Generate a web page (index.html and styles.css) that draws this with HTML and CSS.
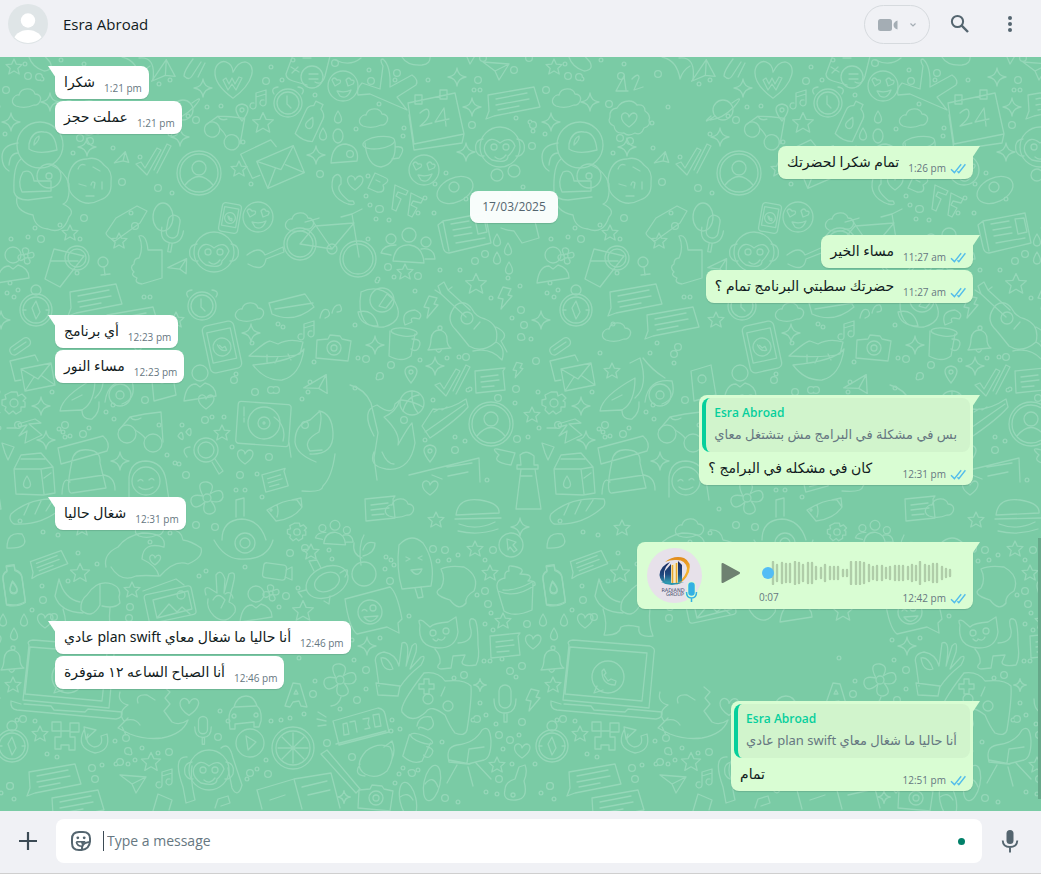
FILE: index.html
```html
<!DOCTYPE html>
<html lang="en">
<head>
<meta charset="utf-8">
<title>Esra Abroad</title>
<link rel="stylesheet" href="styles.css">
</head>
<body>
<svg class="sprite" width="0" height="0" aria-hidden="true">
  <defs>
    <symbol id="ticks" viewBox="0 0 16 11"><path d="M1 6.2 4.4 9.6 11.2 1.2M7.4 8.3 8.8 9.6 15.4 1.2" fill="none" stroke="#53bdeb" stroke-width="1.4"/></symbol>
    <path id="star" d="M0-8 2.4-2.8 8-2.4 3.8 1.4 5.2 7 0 4 -5.2 7 -3.8 1.4 -8-2.4 -2.4-2.8Z"/>
    <path id="spark" d="M0-9Q1-1 9 0Q1 1 0 9Q-1 1-9 0Q-1-1 0-9Z"/>
    <path id="heart" d="M0 7C-12-1-7-8-3-7Q0-6 0-3Q2-7 5-7C10-6 9 1 0 7Z"/>
    <path id="drop" d="M0-6Q-7 5 0 6Q7 5 0-6Z"/>
    <path id="bolt" d="M-2-11 6-9 3-3 7-2-4 11-2 1-7 0Z"/>
    <path id="cloud" d="M-11 8C-19 4-12-4-8-3C-6-11 6-11 8-4C17-4 14 8 7 7Q-2 11-11 8Z"/>
    <path id="plane" d="M-13-8 13-6 3 10-1 1Zl12 9L13-6"/>
    <path id="music" d="M-4 7V-6L6-9V4M-4-2 6-5M-4 7a3 3 0 1 1-2-3M6 4a3 3 0 1 1-2-3"/>
    <path id="pin" d="M0 9Q-12-6 0-8Q12-6 0 9ZM2-2a2 2 0 1 1-4 0a2 2 0 1 1 4 0"/>
    <g id="clock"><circle r="14"/><circle r="11"/><path d="M-1-7V1L3 5M-14-9q-4-6 4-7M14-9q4-6-4-7"/></g>
    <g id="gear"><circle r="4"/><path d="M-3-11h6l1 4 4-2 4 4-3 3 2 1v5l-4 0 0 4-5 3-3-3-4 3-4-4 1-3-4-2v-5l4-1-1-4 4-2Z"/></g>
    <g id="love"><circle r="15"/><path d="M-11-6q2-4 5 0q5-1 3 3l-5 3-3-6M3-6q3-4 5 0q5 0 2 4l-5 2-2-6M-6 5Q2 7 8 4Q4 14-3 10Z"/></g>
    <g id="profile"><circle r="22"/><circle r="19"/><circle cy="-5" r="7"/><path d="M-14 12Q0-5 14 12"/></g>
    <g id="person"><circle cy="-13" r="8"/><path d="M-16 15Q-14-2-4-2L0 1 5-3Q16 0 16 10Z"/></g>
    <g id="note"><path d="M-23-6 23-14 29 6-17 15-25 18-22 10ZM-15-2 16-8M-15 4 18-2M-13 9 8 5"/></g>
    <g id="notice"><path d="M-15-9 15-12 13-9 15 10-14 13ZM-9-3 8-5M-9 2 9 0M-8 7 4 6"/></g>
    <g id="compass"><circle r="16"/><circle r="13"/><circle cy="-20" r="5"/><path d="M0-9 4 2 0 9-4-2ZM-13 0h3M10 0h3"/></g>
    <g id="mug"><path d="M-13-12-14 13Q-1 20 8 13L12-9M9-4Q21-4 15 6Q12 9 8 6"/><ellipse cy="-11" rx="13" ry="4" transform="rotate(6)"/></g>
    <g id="bell"><path d="M-11 9Q-8 5-8-2Q-7-11 1-11Q8-9 8-2Q8 5 12 7ZM-3 9q3 5 6-1"/><circle cx="1" cy="-13" r="2"/></g>
    <g id="camera"><path d="M-17-8-6-9-4-13 6-12 8-9 17-7 14 13-18 10Z"/><circle r="7"/><circle r="3"/></g>
    <g id="mic"><rect x="-6" y="-18" width="12" height="23" rx="6"/><path d="M-11-4Q-11 10 0 10Q11 10 11-4M-1 10v9h3v-9"/></g>
    <g id="bottle"><path d="M-4-20h8v5q6 3 6 8v25q-9 4-19 0V-8q0-5 5-7Z"/><use href="#drop" y="2"/></g>
    <g id="phone"><rect x="-16" y="-24" width="32" height="48" rx="5"/><path d="M-12-17h24v31h-24Z"/><circle r="9"/><path d="M-4-3q2 8 8 7l-1-4-3 1-2-3"/></g>
    <g id="glasses"><circle cx="-12" r="9"/><circle cx="14" cy="9" r="9"/><path d="M-4-4Q3 0 6 4M-20-4-9-17 6-20 22-22 24 8M-9-17Q-5-12 2-16"/></g>
    <g id="monkey"><circle r="20"/><path d="M-17-8q-9 1-7 12q3 6 8 5M17-8q9 1 7 12q-3 6-8 5M-15-2Q-10-12 0-4Q11-12 15-1Q12 6 8 9Q8 17-8 13Q-18 6-15-2M-5 10Q1 15 6 8"/><circle cx="-6" r="3"/><circle cx="6" r="3"/></g>
    <g id="ticksbig"><path d="M-17 4-12 2-8 8 4-12 8-10-6 15ZM1 10 14-16 18-14 4 13"/></g>
    <g id="mail"><path d="M-16-7 14-13 18 9-12 15ZM-16-7 1 3 14-13M-12 15-3 1M18 9 5 0M-16 4l-6 1-5-20 25-6 3 6"/></g>
    <g id="group"><circle cy="-11" r="7"/><circle cx="-18" cy="-7" r="5"/><circle cx="17" cy="-4" r="5"/><path d="M-16 15Q-14-2 1-1Q14 1 15 17ZM-18 9-28 7Q-26-1-13-1M16 13h10Q25 1 12 3"/></g>
    <g id="news"><path d="M-24-12 18-20 24 10-18 20Q-23 20-24 14L-29-8-24-12-18 18M-16-9 2-12M-14-3 4-6M-13 3 5 0M-11 10 18 5M8-14 17-15 20-1 11 1Z"/></g>
    <g id="cookie"><path d="M-20-7Q-16-22-2-22Q8-25 15-16Q24-10 22 2Q23 15 11 19Q-2 26-12 18Q-24 10-20-7ZM-11-12q2-6 7-4M4-14l7 4M-10 3l7 2M2 4q1-5 4-2l-1 5M-3 15h8M13 1v7"/></g>
    <g id="flower"><circle r="4"/><path d="M-4-2Q-12-17 0-16Q9-14 3-4Q16-12 16-1Q14 6 4 3Q13 14 3 16Q-6 16-2 4Q-13 14-16 4Q-17-5-4-2Z"/></g>
    <g id="guitar"><path d="M-38-36-32-40-28-32-6-12M-38-36-35-28-10-5M-35-28l-6-4M-28-32l4-3M-20-17Q-11-23-4-13Q0-5 9-3Q24 3 20 20Q6 32-7 24Q-15 14-20 8Q-32-3-20-17ZM20 20Q30 25 26 38Q15 25-3 29M20 5Q34 12 25 19L31 30"/><circle cx="-9" cy="-4" r="6"/><path d="M-2 7 4 0"/></g>
    <g id="laptop"><path d="M-39-32Q-42-36-35-37L42-31Q48-29 46-23L41 31-45 23ZM-38-30 39-24 34 24-43 17ZM-47 27-57 24Q-58 32-51 33L48 42Q55 41 54 35L20 32 17 35-14 33-17 29-44 27"/><circle r="16"/><path d="M-11 9-14 16-5 13M-6-6Q-6 8 7 8L8 4 3 2 0 4-4-2-2-4-4-8Z"/></g>
    <g id="calendar"><path d="M-26-14 21-24 30 17-20 27ZM-25-2-20 33 28 26 30 17M-19-22h7v9h-7ZM6-27h7v9H6ZM-14-4Q-5-12-5-3Q-5 2-14 9L-2 6M12 9 10-9 1 5 15 2"/></g>
    <g id="astro"><circle r="23"/><path d="M-11-1Q-8-15 4-13Q15-13 17 5Q-2 10-11 4ZM-6 0q0-7 5-9q1 4-5 9M-22-2Q-38 0-38 12Q-38 22-31 26M-19 14Q-27 20-26 47Q-24 55-12 55L12 52M-22 8q-8 0-9 12M11 20Q25 26 29 39Q30 57 23 59Q36 65 29 72Q23 90 8 84Q-5 83-7 70Q-26 66-23 52M-17 27Q-23 37-18 47L11 46V36H-6Q-8 23-17 27Z"/><circle cx="9" cy="31" r="12"/><circle cx="9" cy="31" r="3"/></g>
    <g id="cat"><path d="M-22-19Q-28-22-25-15Q-28 7-6 8Q11 8 13-8L11-23 3-18Q-11-17-15-13ZM-10 9Q-4 16-5 23Q-10 28-4 29L6 28 8 16 20 15 17 22Q17 27 31 25Q35 18 33 5Q33-16 30-20Q22-25 26-10Q28 2 13 3M-12-1q4 4 5 0q5 3 7-2"/><circle cx="-12" cy="-7" r="3"/><circle cx="1" cy="-9" r="3"/></g>
    <g id="pad"><path d="M-12-32Q2-34 9-24Q29-26 35-19Q36-6 31 25Q29 32 19 28Q14 22 9 10Q-5-1-10 7Q-24 20-34 7Q-37 0-12-32Z"/><circle cx="-8" cy="-6" r="5"/><circle cx="12" cy="1" r="5"/><path d="M-12-26h5v5h5v5h-5v5h-5v-5h-5v-5h5ZM5-9 9-18"/></g>
    <g id="turntable"><rect x="-27" y="-20" width="53" height="42" rx="3" transform="rotate(4)"/><circle r="16"/><circle r="6"/><circle r="1"/><path d="M10-6Q23 3 19 18M-20-16v9M-20-5v4"/></g>
    <g id="lips"><path d="M-29-1Q-12-16-8-16L0-13Q11-19 25-15L22-3Q8 1-29-1ZM-25 8Q-13 24 4 23Q22 19 26-8Q17 4-25 8M-11-2v7M0 0-3 6M10-3l3 6"/></g>
    <g id="bike"><circle r="18"/><circle r="15"/><circle cx="-58" cy="-15" r="16"/><circle cx="-58" cy="-15" r="13"/><path d="M1-2-6-45-17-42M-6-45 4-50M-58-15-43-33-4-36-26-10ZM-26-10-46-39-53-37-39-41"/><circle cx="-26" cy="-10" r="5"/></g>
    <g id="airplane"><path d="M-5-28Q-9-35-5-35Q3-28 2-7L24-19Q31-14 28-9L9 3 19 16-18 0-30 1Q-32-5-26-11L-8-5Z"/></g>
    <g id="car"><path d="M-16 5Q-16-4-11-7Q-8-18 1-18Q9-18 12-8Q17-4 16 7L14 13H9V8L-10 10V15H-15ZM-10-7 11-8"/><circle cx="-11" cy="2" r="2"/><circle cx="11" cy="1" r="2"/></g>
    <g id="citrus"><circle r="21"/><circle r="17"/><path d="M0-15V15M-15 0H15M-11-11 11 11M11-11-11 11"/></g>
    <g id="chair"><path d="M-21 7Q-25-8-13-10Q5-12 12-25Q20-31 21-14Q21 3 14 5L-2 9ZM0 9-21 5M-13 10-23 28M-2 12 3 31M6 8 21 24M14-8-1-6-3 8"/></g>
    <g id="dog"><path d="M-8-5Q2-21 17-16Q27-12 24-3L25 3Q20 9 7 6M-8-5Q-15 0-14 10Q-3 20 5 5V-16M-12 13Q-35 12-40-4L-36-21Q-31-1-15 2M-32 9Q-27 25-31 35-16 36-14 27-8 24 4 27 2 38 18 36Q13 24 15 8"/></g>
    <g id="cup"><path d="M-19-8Q-17 15-3 16Q13 13 11-9M11-4Q24-6 15 7L8 8"/><ellipse cx="-4" cy="-9" rx="16" ry="6" transform="rotate(-8)"/></g>
    <g id="cream"><path d="M-17-24Q-5-37 7-26Q20-7 15 17L-14 20Q-20 0-17-24ZM-1 19 2 29 7 28 5 18M-10-8l4-2-4-2M6-9 2-11l4-2M-5 1 6 0Q2 10-5 1"/></g>
    <g id="pack"><path d="M-26-15 19-27Q27-20 23-12L-23 1ZM-12-2Q-10-15 5-13Q17-12 16 0L22 25-12 30Q-19 31-12-2ZM-14 17 20 12M-22 31Q-21 12-14 19M20 12Q31 14 31 27"/></g>
    <g id="dino"><path d="M-30-15Q-33-5-22-2-33 5-26 14-15 10-10 18M-12-4Q-15-13-3-12L5-7M14-20 20-15 15-9 20-3 14 4 22 15Q30 19 38 13Q33 27 12 31Q-5 33-20 27L-32 21-22 11M-24 28l-4-8"/></g>
    <path id="smalldots" d="M5 134h0M7 90h0M25 64h0M42 79h0M61 60h0M84 64h0M73 153h0M112 123h0M128 107h0M170 134h0M159 84h0M170 80h0M172 193h0M207 107h0M221 106h0M271 67h0M282 80h0M315 95h0M113 148h0M140 157h0M188 116h0M243 142h0M251 184h0M293 60h0M369 70h0M395 80h0M428 80h0M474 90h0M480 90h0M404 128h0M379 104h0M356 129h0M403 136h0M446 173h0M516 118h0M533 131h0M530 122h0M466 199h0M509 195h0M368 176h0M370 205h0M418 213h0M434 213h0M389 220h0M366 196h0M425 198h0M368 239h0M435 184h0M523 187h0M376 219h0M11 239h0M28 237h0M35 228h0M80 239h0M60 225h0M77 273h0M144 297h0M10 283h0M7 293h0M14 297h0M18 290h0M131 213h0M150 297h0M460 270h0M440 270h0M415 291h0M377 281h0M378 279h0M394 277h0M491 298h0M508 278h0M520 286h0M531 339h0M512 318h0M523 338h0M355 325h0M358 358h0M420 360h0M378 378h0M459 357h0M447 358h0M468 390h0M470 389h0M515 403h0M538 392h0M433 400h0M455 437h0M425 440h0M465 441h0M539 428h0M528 437h0M487 480h0M52 392h0M59 429h0M65 437h0M82 435h0M110 353h0M117 343h0M134 363h0M159 425h0M60 353h0M73 324h0M113 405h0M63 432h0M70 436h0M89 428h0M106 412h0M114 419h0M167 455h0M175 463h0M179 464h0M182 425h0M212 417h0M224 417h0M232 447h0M236 490h0M245 490h0M257 474h0M236 374h0M252 343h0M278 324h0M283 327h0M314 362h0M302 399h0M308 392h0M310 382h0M355 388h0M20 521h0M43 532h0M58 535h0M170 533h0M179 509h0M262 497h0M245 567h0M78 553h0M97 564h0M68 581h0M42 586h0M32 610h0M150 542h0M199 576h0M206 571h0M332 559h0M329 550h0M279 607h0M298 588h0M352 640h0M386 557h0M391 560h0M394 565h0M438 561h0M449 560h0M458 555h0M477 595h0M485 560h0M491 613h0M485 624h0M493 630h0M385 569h0M409 616h0M380 638h0M354 660h0M366 689h0M454 678h0M484 661h0M490 661h0M502 659h0M516 677h0M480 703h0M486 715h0M473 720h0M496 724h0M392 720h0M391 731h0M400 729h0M442 742h0M503 749h0M519 735h0M512 764h0M535 764h0M403 768h0M399 774h0M395 783h0M418 770h0M410 772h0M458 802h0M486 792h0M497 794h0M541 793h0M47 754h0M57 757h0M17 720h0M35 721h0M102 765h0M116 764h0M130 753h0M135 760h0M128 764h0M158 753h0M142 748h0M115 741h0M220 711h0M228 721h0M271 721h0M281 720h0M290 718h0M304 714h0M299 658h0M315 681h0M266 760h0M247 779h0M257 769h0M14 799h0M340 709h0"/>
    <path id="bigdots" d="M6 90h0M28 76h0M196 120h0M266 81h0M335 63h0M90 141h0M122 182h0M158 188h0M320 174h0M371 81h0M397 73h0M478 80h0M514 70h0M529 58h0M472 125h0M532 146h0M533 125h0M483 58h0M39 77h0M81 76h0M69 104h0M118 74h0M80 138h0M379 209h0M350 154h0M380 209h0M84 218h0M135 226h0M41 239h0M475 261h0M485 254h0M388 267h0M418 276h0M521 310h0M524 325h0M521 337h0M536 361h0M466 357h0M391 365h0M366 359h0M380 376h0M516 389h0M498 398h0M404 420h0M455 450h0M517 439h0M18 425h0M65 425h0M83 434h0M134 354h0M138 347h0M145 400h0M234 380h0M255 392h0M276 390h0M271 390h0M205 420h0M240 475h0M186 475h0M269 457h0M305 425h0M305 548h0M196 525h0M215 527h0M43 600h0M54 617h0M130 607h0M129 618h0M290 553h0M286 596h0M433 549h0M445 550h0M493 550h0M390 581h0M485 591h0M488 604h0M527 624h0M366 670h0M464 675h0M510 671h0M522 666h0M357 700h0M499 735h0M510 740h0M477 719h0M522 722h0M23 719h0M126 738h0M128 751h0M218 737h0M313 694h0M327 743h0M92 768h0M120 762h0M169 752h0M10 786h0M95 779h0M250 773h0M268 774h0M445 798h0M550 786h0M352 757h0M412 773h0M499 779h0"/>
    <g id="doodles">
      <g class="dot-ring"><use href="#smalldots" stroke-width="5"/><use href="#bigdots" stroke-width="8"/></g>
      <g class="dot-core"><use href="#smalldots" stroke-width="2.4"/><use href="#bigdots" stroke-width="5.4"/></g>
      <use href="#star" x="14" y="67"/><path d="M29 57q3 10 15 14 10-1 6-9l-9-10M122 57q15 3 18 22 3-9 10-13M139 58q17-2 14 22M193 59q-9 12-9 17 5 5 8 0l9-14M198 77l7-14"/>
      <use href="#cloud" x="27" y="98"/><use href="#spark" x="50" y="102"/><use href="#spark" x="11" y="122"/><use href="#spark" x="203" y="88"/><use href="#spark" x="180" y="137"/><use href="#spark" x="87" y="147"/>
      <use href="#plane" transform="translate(165 74) rotate(-60)"/><use href="#plane" transform="translate(123 160) rotate(-50) scale(.6)"/>
      <circle cx="183" cy="110" r="10"/><path d="M175 116q-15 10-4 0M192 103q14-10 2 4-12 12-24 13"/>
      <use href="#heart" transform="translate(233 80) scale(2.4 2.6)"/><path d="M223 80l5 10 4-6 4 6 6-12-3-1-4 7-3-6-3 6-3-6Z"/>
      <use href="#music" x="260" y="99"/><use href="#clock" x="288" y="103"/><path d="M293 55l-7 19q0 5 7 7l14 4M315 82q7 4 10-6l5-20M291 67l8 5m-7 1l6-6M303 58h8M309 74h9M309 79h9"/><circle cx="312" cy="77" r="11"/><use href="#love" x="343" y="86"/>
      <use href="#pin" x="242" y="112"/><use href="#star" transform="translate(263 123) scale(1.3)"/><use href="#bottle" transform="translate(311 121) rotate(25)"/><use href="#drop" x="338" y="117"/><use href="#drop" x="323" y="134"/><ellipse cx="338" cy="136" rx="5" ry="7"/>
      <use href="#glasses" transform="translate(222 132) rotate(14) scale(.85)"/><use href="#mail" transform="translate(279 166) rotate(-12) scale(1.3)"/>
      <use href="#astro" x="40" y="145"/><use href="#cookie" x="89" y="181"/><use href="#ticksbig" x="153" y="160"/><use href="#profile" x="199" y="173"/><use href="#star" x="239" y="169"/><use href="#spark" x="316" y="155"/>
      <path d="M76 91l8-15 2 14M76 91h12M92 79q7-7 7-1l-5 12 9-3"/><path d="M89 101q5 0 8 4 8-1 8 6 6 4 4 9 2 6-5 8-3 8-9 5-7 4-11 0-9 1-10-7-7-3-4-9-1-8 7-9 4-7 12-7"/><use href="#heart" x="89" y="120"/>
      <path d="M333 178q5-7 8 0v6q-7 5 8 17l4 0q4 5-5 3-20-7-15-26"/><use href="#heart" x="355" y="183"/><path d="M331 163q1-19 15-19 14 3 11 17Z"/>
      <use href="#airplane" x="388" y="94"/><use href="#spark" x="457" y="77"/><use href="#spark" x="472" y="107"/><use href="#spark" x="466" y="152"/><use href="#calendar" x="434" y="117"/><use href="#cloud" x="374" y="118"/><use href="#cup" x="384" y="151"/><use href="#love" x="424" y="170"/>
      <path d="M375 173l9 4q8 3-1 8 3 8-6 7l-9-4ZM376 180l4 2M395 185l13 6-2 4-8-3-2 4 5 3-5 12-4-2ZM411 193l12 6-2 4-8-2-2 4 6 3-5 9-4-2Z"/>
      <ellipse cx="455" cy="190" rx="19" ry="12" transform="rotate(-25 455 190)"/><circle cx="454" cy="187" r="5"/><use href="#monkey" x="500" y="147"/><circle cx="497" cy="175" r="6"/><circle cx="514" cy="171" r="6"/><use href="#note" x="511" y="101"/><use href="#plane" x="496" y="70"/><path d="M402 57q5 9 20 8 9-1 8-9M467 57l3 7 6-10M335 60q15 7 26-2"/>
      <use href="#group" x="409" y="246"/><use href="#news" x="467" y="233"/><path d="M501 228q8 3 13 3l8 12 17-5-6-25"/><use href="#drop" x="497" y="240"/><use href="#drop" x="508" y="249"/><use href="#drop" x="497" y="258"/><use href="#drop" x="509" y="268"/>
      <use href="#star" transform="translate(476 284) scale(1.3)"/><use href="#star" x="405" y="272"/><use href="#bolt" x="505" y="298"/><use href="#bolt" x="431" y="307"/><use href="#guitar" x="476" y="322"/><use href="#compass" x="36" y="310"/><use href="#person" x="13" y="268"/><use href="#flower" transform="translate(26 256) scale(.5)"/><use href="#spark" x="1" y="320"/>
      <path d="M54 249l30 7-24 31-15-8ZM50 261h28"/><circle cx="77" cy="258" r="12"/><circle cx="77" cy="258" r="9"/><use href="#note" x="93" y="298"/><use href="#note" x="130" y="321"/><path d="M139 258q5-11 0-22 7-3 9 14h14v28l-20 6q-8-1-5-6-7-3-3-6-5-5 0-8 0-6 5-6M116 218l21-12 10 5-7 12-25 18q-9-5-9-8Z"/>
      <circle cx="103" cy="262" r="5"/><path d="M104 267l1 8m-4 0l9-1"/><use href="#star" x="70" y="233"/><use href="#star" x="119" y="241"/><use href="#cloud" x="77" y="332"/><circle cx="382" cy="300" r="12"/><path d="M361 292q17-8 31 5 16 23-8 30-29 3-23-35M358 312q16-4 20 14-18 0-20-14M379 306l8-12 6 5-7 9ZM405 325q-5-14 10-15 9 4 4 9-10-3-7 3Z"/>
      <use href="#mug" x="403" y="343"/><use href="#bell" x="439" y="341"/><use href="#spark" x="375" y="345"/><use href="#spark" x="435" y="366"/><use href="#ticksbig" x="452" y="381"/><use href="#notice" x="490" y="380"/><use href="#pin" x="411" y="374"/><use href="#bolt" transform="translate(518 370) scale(.7)"/><use href="#mail" x="37" y="376"/><use href="#star" x="72" y="371"/>
      <rect x="9" y="342" width="23" height="9" rx="4" transform="rotate(-35 20 347)"/><path d="M14 350l12-8"/><path d="M60 411q2-15 35-33 0 25-13 32ZM72 400l10-5M95 398q14-12 5-40l-10 5M103 358q9 12 22 20M105 402q3-24 27-21 5 18-10 23M82 410q0 10 10 9 8-6 7-17"/><circle cx="120" cy="395" r="11"/><circle cx="120" cy="395" r="4"/>
      <circle cx="412" cy="403" r="12"/><path d="M401 400q12 1 22 7M403 411q4-15 16-16M412 391q-1 14 6 22"/><path d="M422 426l11-17q15 2 33-10l2 8q-10 12-38 31ZM425 432l40-28M434 412l5-3M442 410l5-3"/><use href="#profile" x="491" y="424"/><use href="#gear" x="14" y="403"/><use href="#star" x="532" y="415"/><use href="#spark" x="41" y="406"/><use href="#spark" x="46" y="440"/>
      <path d="M18 424l17-5 6 4-12 1 13 11-17 8 2-12-8 5 8-11-8 2Z"/><use href="#pin" x="430" y="453"/><path d="M374 436q-14-26 3-31 16 12 18-1l5-4q-4 12-16 17 17 16 14 28 10-18 14-22l3 20q-5 29-29 26-18-3-12-17M382 452q5 12 12 12M350 385q15 4 21 18l7 30-4 25 3 22"/>
      <path d="M409 475l70-17 1 24M447 467l25-4M432 475l10 4M448 476l20-4M497 449l18 4-4 12q-20-3-12-10-8-7-2-6M520 455q6-6 14 1v9h4v4h-21v-4h4ZM521 469l-5 40h25l-6-40M521 476h11"/><path d="M14 469l7-14 20-2 12 14 2 26-12 2-27-1ZM14 469h27l12-2M41 469l3 25M21 459h24M44 478l7-5"/><use href="#drop" x="27" y="482"/><use href="#pack" x="84" y="463"/><use href="#glasses" x="139" y="434"/>
      <use href="#spark" x="120" y="461"/><circle cx="146" cy="481" r="14"/><path d="M129 497V477q2-16 17-16 17 1 20 19l3 20M138 481q3-3 5 0M149 480q3-3 5 0M139 487q6 5 14 0M11 514q20-18 53-15 2 5-1 8-21 19-49 17-6-4-3-10M24 515l5-11M35 514l6-13M46 511l7-11M7 428h9M2 443l12 4-6 13-3-7Z"/>
      <use href="#phone" transform="translate(222 347) rotate(-12)"/><use href="#lips" x="278" y="357"/><use href="#camera" x="334" y="348"/><use href="#person" x="200" y="386"/><use href="#heart" x="206" y="402"/><use href="#plane" transform="translate(319 387) rotate(-35)"/><use href="#turntable" x="264" y="423"/><use href="#music" x="308" y="330"/><use href="#spark" x="251" y="333"/><use href="#star" x="222" y="433"/><circle cx="206" cy="450" r="12"/><circle cx="206" cy="450" r="8"/><path d="M215 459l8 12-4 3-7-12M187 457q-7-9 3-10M178 436q4-7 5 0t-5 0M186 432q5-7 5 0t-5 0"/>
      <use href="#heart" x="245" y="457"/><use href="#flower" x="207" y="498"/><use href="#notice" transform="translate(275 480) rotate(-10) scale(.8)"/><use href="#gear" transform="translate(297 532) scale(.8)"/><use href="#group" transform="translate(335 533) scale(.7)"/><path d="M267 510q18-11 30-10l5 7q-8 12-26 14l-9-11ZM277 505q2 6 0 12M292 500l9-2 1 9"/><circle cx="271" cy="510" r="1"/><path d="M291 457l-2-14M316 462q-20-8-21-20 0-18 15-22l10-9M322 450l-12 1q-8-10 9-19 4-18 0-21 13 2 14 22 1 22-23 21M302 491q20 2 21-5 9-9 12-32"/><use href="#cloud" x="250" y="312"/><use href="#clock" x="202" y="306"/>
      <path d="M269 303l36-9 9 13q-20 17-42 7ZM275 309l38-6M320 318q2-11 8-8 4 6-3 8M332 313q2-9 8-8 4 7-3 7"/><use href="#bike" x="358" y="259"/><use href="#monkey" x="214" y="252"/><path d="M247 255q13-10 18 0l18-8 1 5-18 7q-2 14-18 5"/><use href="#mic" transform="translate(172 233) rotate(10)"/><use href="#plane" transform="translate(180 268) rotate(-30) scale(.8)"/><use href="#star" x="176" y="320"/><path d="M151 371l20-6 5 30-22 6Z"/><circle cx="162" cy="379" r="4"/><ellipse cx="163" cy="217" rx="10" ry="14"/><use href="#love" x="258" y="217"/><use href="#cloud" x="300" y="222"/><use href="#phone" transform="translate(230 218) rotate(10) scale(.6)"/>
      <use href="#note" transform="translate(47 563) rotate(-10) scale(.7)"/><use href="#bottle" transform="translate(13 586) rotate(-8)"/><use href="#star" transform="translate(80 573) scale(1.2)"/><path d="M106 567q-3-13 12-20 8-11 24-14 25 0 22 14-21-6-22 12 15 7 17 17-14-1-23 0-15 7-25-9M160 576q15-17 28-12 16-7 13-16-10-7-18-8-2-11-13-10"/><use href="#heart" transform="translate(155 560) scale(.7)"/><use href="#dog" x="95" y="600"/><use href="#star" x="132" y="590"/><rect x="146" y="590" width="48" height="29" rx="3" transform="rotate(-12 170 604)"/><path d="M153 600l35-9 4 18-35 9ZM157 618l12-14 8 8 5-5 8 7M143 591l33-12 8 6"/><circle cx="181" cy="595" r="4"/>
      <path d="M206 595q-3-9 3-7l8 5-1-18q5-7 9 4l-1 14 5-19q7-4 5 6l-5 22q8 3 6 10-9 14-21 4-8-8-6-17M213 600q5-9 12 0l-4 8M225 594q6-4 8 4"/><use href="#person" transform="translate(256 607)"/><use href="#flower" transform="translate(271 593) scale(.5)"/><use href="#star" transform="translate(303 611) scale(1.3)"/><ellipse cx="327" cy="582" rx="22" ry="15" transform="rotate(-25 327 582)"/><ellipse cx="327" cy="582" rx="13" ry="9" transform="rotate(-25 327 582)"/><path d="M314 571l-5-10 8-1 4 8M340 573q12-8 5 4M330 596l-1 8-5-3M306 590l-8 2 4 5"/><rect x="263" y="564" width="23" height="15" rx="3" transform="rotate(8 275 572)"/><path d="M286 570l6-3v13l-7-3"/><use href="#star" x="311" y="552"/><path d="M214 540q10 18 25 19 28 2 34-19"/><circle cx="245" cy="543" r="10"/><circle cx="245" cy="543" r="5"/>
      <use href="#bell" x="12" y="661"/><use href="#laptop" x="68" y="677"/><use href="#star" x="13" y="685"/><use href="#heart" x="45" y="621"/><use href="#drop" x="24" y="620"/><use href="#drop" x="14" y="634"/><use href="#drop" x="3" y="620"/><use href="#compass" x="12" y="746"/><use href="#star" x="40" y="734"/><path d="M52 722h9v9h-9ZM70 723h9v9h-9ZM61 731h9v6h5v13h-6v-5h-8v4h-6v-12h6Z"/><path d="M84 730q-9 18 11 23 16-2 12-19l-6 2q3 10-7 11-10-4-6-13M84 727l12 3-10 9Z"/>
      <use href="#dino" x="150" y="707"/><use href="#heart" transform="translate(189 707) scale(1.2)"/><use href="#car" x="245" y="714"/><use href="#mic" transform="translate(203 730) scale(.75)"/><path d="M285 706l8-23 7 1 7 23-6-1-2-5-6 1-3 5ZM294 694l2-4 2 4Z"/><use href="#flower" transform="translate(340 680)"/><path d="M341 697q-2 8-10 9"/><path d="M333 721l45-13q6 1 7 6l4 18-50 13ZM343 724l4-1 2 11-5 1ZM350 722l5-1 2 11M363 719l6-1-1 6 2 4-5 1M373 715l6-1 2 12-6 1ZM336 744l50-13M318 712l8 5M317 719l9 2M318 726l8-1"/><use href="#citrus" x="293" y="748"/><circle cx="250" cy="743" r="14"/><path d="M246 736l10 6-8 8Z"/>
      <use href="#monkey" x="209" y="770"/><path d="M187 757q-15-1-4 30l3 16 9-3q-5-22-3-34M221 748q8-7 12 10l9 27q-4 14-10 3l-4-20"/><use href="#star" transform="translate(151 762) scale(1.2)"/><use href="#plane" x="133" y="783"/><use href="#note" x="52" y="778"/><use href="#note" x="75" y="804"/><use href="#music" x="166" y="778"/><path d="M257 790l37-11 37-6 9 35M294 779l8 30M270 800l15-5M302 787l25-6M308 795l22-5M257 790l5 19M321 754l6-4 33 39-4 4ZM153 811l5-17 14 6-3 10M215 808l3-9 10-3 2 7-9 3"/><use href="#spark" transform="translate(344 797) scale(.7)"/>
      <circle cx="364" cy="574" r="12"/><path d="M361 565q-3-20 3-30M362 558q-10-4-8-15M363 556q12-3 12-13-9-3-12 7"/><use href="#cream" x="416" y="569"/><path d="M441 569q8-4 23-2 16 9 10 24-9 5-8 12-7 9-16-3-20-6-9-12 5-9 0-19"/><use href="#star" x="475" y="549"/><use href="#star" x="490" y="573"/><circle cx="511" cy="545" r="12"/><path d="M507 539l9 3-3 3 4 5-3 2-4-5-2 3Z"/><path d="M498 591l6 20q10 7 28-1l1-27M498 591q-4-11 7-13-1-7 4-7-1-6 2-5 16 2 9 8 15 0 8 7 8-1 7 4-19 14-37 6M503 590q13 1 29-8"/><use href="#bottle" transform="translate(553 585) rotate(-8)"/>
      <path d="M345 599l45-12q7 5 12 32l-4 4 1 10-12-6-30 7q-8-6-12-35"/><circle cx="370" cy="612" r="12"/><circle cx="373" cy="608" r="3"/><path d="M362 611q2-3 5 0M364 617l14-1q-7 10-14 1"/><use href="#cat" x="445" y="640"/><use href="#star" x="503" y="621"/><use href="#notice" x="505" y="645"/><use href="#heart" x="533" y="642"/><path d="M379 686l-3-22q-3-10 8-12 12 2 15 14l3-23q9-4 4 23l6-20q6-7 4 6l-6 17 11-12q6-3 0 8-14 11-21 22M376 683l24 3-2 10-20-1ZM381 658q7-2 12 11-10 3-12-11"/><use href="#pad" x="436" y="705"/><use href="#spark" x="367" y="646"/><use href="#spark" transform="translate(480 685) scale(.7)"/><use href="#mic" x="505" y="703"/><use href="#bolt" x="533" y="700"/>
      <use href="#mug" transform="translate(418 748) rotate(15) scale(.9)"/><path d="M417 726q2-11 14-9 6 9-3 13-11-5-9-1M366 751q12-9 24-4 6 9-3 24-11 9-22 3-12-8 1-23M384 747l8-6q4 9 0 18M360 764q-7 11 5 12"/><use href="#camera" x="376" y="798"/><use href="#chair" x="470" y="755"/><use href="#heart" x="522" y="751"/><use href="#star" x="497" y="765"/><path d="M519 767l6-2q3 7-1 16 5 18-8 19-14 1-11-10 0-8 10-11Z"/><circle cx="513" cy="795" r="2"/><ellipse cx="432" cy="783" rx="8" ry="18" transform="rotate(12 432 783)"/><path d="M425 784q8-10 13 3"/><ellipse cx="408" cy="800" rx="8" ry="18" transform="rotate(-12 408 800)"/><path d="M400 797q8-6 13 3"/>
      <path d="M456 515q2-18 24-15 20 3 19 13ZM455 519l46-1M459 524q18 7 36-2M458 531q20 5 40-2"/><use href="#star" x="436" y="520"/><use href="#cloud" x="400" y="508"/><use href="#spark" x="520" y="527"/><use href="#notice" x="380" y="508"/><use href="#heart" x="430" y="488"/><path d="M222 540q0-20 20-21 18 1 24 21M236 517v-17l8-2v18"/><use href="#cloud" x="150" y="528"/><use href="#star" x="82" y="528"/><path d="M7 548q0-17 15-14 10 15-15 14Z"/>
    </g>
  </defs>
</svg>

<main class="app">
  <header class="topbar">
    <svg class="avatar" viewBox="0 0 40 40" aria-hidden="true"><defs><clipPath id="round"><circle cx="20" cy="20" r="19"/></clipPath></defs><circle cx="20" cy="20" r="20" fill="#dfe5e7"/><g clip-path="url(#round)" fill="#fff"><circle cx="20" cy="16.500" r="7.200"/><ellipse cx="20" cy="37.500" rx="14.500" ry="11.500"/></g></svg>
    <h1 class="contact">Esra Abroad</h1>
    <button class="call" type="button" aria-label="Video call">
      <svg width="22" height="14" viewBox="0 0 22 14"><rect x="1" y="1" width="14" height="12" rx="2.500" fill="#a4adb4"/><path d="M20.500 2.500v9q-4-1.500-4-4.500t4-4.500Z" fill="#a4adb4"/></svg>
      <svg width="8" height="6" viewBox="0 0 8 6"><path d="M1.500 1.500 4 4l2.500-2.500" fill="none" stroke="#a4adb4" stroke-width="1.200"/></svg>
    </button>
    <button class="icon" type="button" aria-label="Search"><svg width="24" height="24" viewBox="0 0 24 24"><circle cx="9.500" cy="9.500" r="5.600" fill="none" stroke="#54656f" stroke-width="2"/><path d="m13.700 13.700 6.300 6.300" stroke="#54656f" stroke-width="2.400"/></svg></button>
    <button class="icon" type="button" aria-label="Menu"><svg width="24" height="24" viewBox="0 0 24 24" fill="#54656f"><circle cx="12" cy="6" r="2"/><circle cx="12" cy="12" r="2"/><circle cx="12" cy="18" r="2"/></svg></button>
  </header>

  <section class="chat" aria-label="Messages">
    <svg class="wallpaper" aria-hidden="true"><g transform="translate(0 -57)"><use href="#doodles" x="-540"/><use href="#doodles"/><use href="#doodles" x="540"/><use href="#doodles" x="1080"/></g></svg>
    <div class="thread">
      <div class="msg in tail"><span class="text" dir="rtl">شكرا</span><span class="meta">1:21 pm</span></div>
      <div class="msg in last"><span class="text" dir="rtl">عملت حجز</span><span class="meta">1:21 pm</span></div>
      <div class="msg out tail last"><span class="text" dir="rtl">تمام شكرا لحضرتك</span><span class="meta">1:26 pm<svg class="ticks"><use href="#ticks"/></svg></span></div>
      <div class="date">17/03/2025</div>
      <div class="msg out tail"><span class="text" dir="rtl">مساء الخير</span><span class="meta">11:27 am<svg class="ticks"><use href="#ticks"/></svg></span></div>
      <div class="msg out last"><span class="text" dir="rtl">حضرتك سطبتي البرنامج تمام ؟</span><span class="meta">11:27 am<svg class="ticks"><use href="#ticks"/></svg></span></div>
      <div class="msg in tail"><span class="text" dir="rtl">أي برنامج</span><span class="meta">12:23 pm</span></div>
      <div class="msg in last"><span class="text" dir="rtl">مساء النور</span><span class="meta">12:23 pm</span></div>
      <div class="msg out tail last reply">
        <div class="quote"><span class="who">Esra Abroad</span><span class="quoted" dir="rtl">بس في مشكلة في البرامج مش بتشتغل معاي</span></div>
        <div class="line"><span class="text" dir="rtl">كان في مشكله في البرامج ؟</span><span class="meta">12:31 pm<svg class="ticks"><use href="#ticks"/></svg></span></div>
      </div>
      <div class="msg in tail last"><span class="text" dir="rtl">شغال حاليا</span><span class="meta">12:31 pm</span></div>
      <div class="msg out tail last voice">
        <svg class="logo" viewBox="0 0 55 55" role="img" aria-label="Radiand Group">
          <defs><linearGradient id="gold" x1="0" y1="0" x2="0" y2="1"><stop offset="0" stop-color="#e08a1c"/><stop offset=".5" stop-color="#f6b52c"/><stop offset="1" stop-color="#f0a02a"/></linearGradient><linearGradient id="blue" x1="0" y1="0" x2="0" y2="1"><stop offset="0" stop-color="#1c2a5e"/><stop offset=".6" stop-color="#1f4a80"/><stop offset="1" stop-color="#35a3b5"/></linearGradient></defs>
          <circle cx="27.500" cy="27.500" r="27.500" fill="#e7e1ea"/>
          <path d="M18 14Q27 7 37 10Q45 14 42 24Q38 34 29 37Q40 28 40 20Q38 11 28 12Q22 12 18 14Z" fill="url(#gold)"/>
          <path d="M23 14Q13 18 12.500 27Q13 34 20 36L18 33Q14 23 23 14Z" fill="url(#blue)"/>
          <path d="M18 35V23l6-7v19M31 35V13l4 4v16" fill="url(#blue)"/>
          <path d="M24 35V17l7-3v21Z" fill="#f4e7c8"/><path d="M25.500 35V17M29.500 35V15" stroke="#e8a62b" stroke-width="1.500"/>
          <path d="M14 34Q24 40 37 34Q28 36 14 34Z" fill="#2a94ad"/>
          <text x="26" y="43.500" text-anchor="middle" class="logo-text">RADIAND</text><text x="28" y="48" text-anchor="middle" class="logo-text">GROUP</text>
          <g stroke="#d9fdd3" stroke-width="3.500" fill="none"><rect x="42" y="35" width="5" height="12" rx="2.500"/><path d="M39.500 44q0 6 5 6t5-6M44.500 50v4"/></g>
          <g stroke="#33b1e3" stroke-width="1.500" fill="none"><rect x="42" y="35" width="5" height="12" rx="2.500" fill="#33b1e3"/><path d="M39.500 44q0 6 5 6t5-6M44.500 50v4"/></g>
        </svg>
        <button class="play" type="button" aria-label="Play"><svg width="20" height="22" viewBox="0 0 20 22"><path d="M1.500 2 18 11 1.500 20Z" fill="#6e8171" stroke="#6e8171" stroke-width="2" stroke-linejoin="round"/></svg></button>
        <div class="track">
          <div class="seek">
            <svg class="wave" viewBox="0 0 182 24" aria-hidden="true"><path d="M3 1V23M7 4V20M12 2V22M16 3V21M20 3V21M25 1V23M29 2V22M33 4V20M38 2V22M42 2V22M46 6V18M51 7V17M55 4V20M60 6V18M64 6V18M68 6V18M73 9V15M77 9V15M81 1V23M86 1V23M90 1V23M94 2V22M99 4V20M103 6V18M107 5V19M112 5V19M116 7V17M120 6V18M125 5V19M129 5V19M133 5V19M138 6V18M142 4V20M146 5V19M150 1V23M155 4V20M159 5V19M163 3V21M167 3V21M172 6V18M176 8V16M180 9V15" stroke="#b0cda9" stroke-width="2.400" stroke-linecap="round"/></svg>
            <input class="seekbar" type="range" min="0" max="100" value="0" aria-label="Position">
          </div>
          <div class="times"><span>0:07</span><span class="meta">12:42 pm<svg class="ticks"><use href="#ticks"/></svg></span></div>
        </div>
      </div>
      <div class="msg in tail"><span class="text" dir="rtl">أنا حاليا ما شغال معاي plan swift عادي</span><span class="meta">12:46 pm</span></div>
      <div class="msg in last"><span class="text" dir="rtl">أنا الصباح الساعه ١٢ متوفرة</span><span class="meta">12:46 pm</span></div>
      <div class="msg out tail last reply">
        <div class="quote"><span class="who">Esra Abroad</span><span class="quoted" dir="rtl">أنا حاليا ما شغال معاي plan swift عادي</span></div>
        <div class="line"><span class="text" dir="rtl">تمام</span><span class="meta">12:51 pm<svg class="ticks"><use href="#ticks"/></svg></span></div>
      </div>
    </div>
    <div class="thumb"></div>
  </section>

  <footer class="composer">
    <button class="icon" type="button" aria-label="Attach"><svg width="24" height="24" viewBox="0 0 24 24"><path d="M12 3v18M3 12h18" stroke="#3b4a54" stroke-width="2.200"/></svg></button>
    <div class="field">
      <button class="icon" type="button" aria-label="Emoji"><svg width="24" height="24" viewBox="0 0 24 24" fill="none" stroke="#54656f" stroke-width="2"><path d="M21 12.500V9.500Q21 3 14 3h-4Q3 3 3 10v4q0 7 7 7h2.500q8-1 8.500-8.500Z"/><path d="M13 21q-.5-3 1-5 1.500-2.500 7-3"/><path d="M7.300 12.800h9" stroke-width="1.600"/><path d="M7.300 13q1 4.300 5.700 4.300" stroke-width="1.600"/><g fill="#54656f" stroke="none"><circle cx="8.800" cy="8.800" r="1.400"/><circle cx="15.200" cy="8.800" r="1.400"/><path d="M12 13h4l-3 3.500Z"/></g></svg></button>
      <span class="caret"></span>
      <input class="entry" type="text" placeholder="Type a message" aria-label="Type a message">
      <span class="dot"></span>
    </div>
    <button class="icon" type="button" aria-label="Voice message"><svg width="24" height="24" viewBox="0 0 24 24"><rect x="8.500" y="1" width="7" height="14" rx="3.500" fill="#54656f"/><path d="M4.700 11.500q.3 6.500 7.300 6.500t7.300-6.500M12 18v5.500" fill="none" stroke="#54656f" stroke-width="1.900"/></svg></button>
  </footer>
</main>
</body>
</html>
```
FILE: styles.css
```css
* { box-sizing: border-box; }
body {
  margin: 0;
  font-family: "Noto Sans", "Open Sans", "DejaVu Sans", sans-serif;
  font-size: 14px;
  color: #111b21;
}
button { border: 0; padding: 0; background: none; font: inherit; }
.sprite { position: absolute; }
.app { min-height: 100vh; display: flex; flex-direction: column; }

.topbar {
  height: 57px;
  display: flex;
  align-items: center;
  padding: 0 19px 9px 8px;
  background: #f0f1f5;
}
.avatar { width: 40px; height: 40px; }
.contact {
  flex: 1;
  margin: 0 0 0 15px;
  font: 400 15px/20px "Open Sans", sans-serif;
}
.call {
  width: 66px;
  height: 39px;
  margin-right: 18px;
  display: flex;
  align-items: center;
  justify-content: center;
  gap: 10px;
  padding-top: 2px;
  border: 1px solid #d6dade;
  border-radius: 20px;
}
.icon { width: 24px; height: 24px; flex: none; display: flex; }
.topbar .icon + .icon { margin-left: 26px; }

.chat { position: relative; flex: 1; background: #7acba5; overflow: hidden; }
.wallpaper {
  position: absolute;
  inset: 0;
  width: 100%;
  height: 100%;
  fill: none;
  stroke: #95d7b8;
  stroke-width: 1.3;
  stroke-linejoin: round;
  stroke-linecap: round;
}
.sprite path, .sprite circle, .sprite rect, .sprite ellipse { vector-effect: non-scaling-stroke; }
.dot-core { stroke: #7acba5; }
.thumb {
  position: absolute;
  right: 0;
  top: 481px;
  bottom: 12px;
  width: 3px;
  background: #66a98a;
}
.thread {
  position: relative;
  display: flex;
  flex-direction: column;
  align-items: flex-start;
  padding: 9px 68px 8px 55px;
}

.msg {
  position: relative;
  display: flex;
  gap: 9px;
  min-height: 33px;
  margin-bottom: 2px;
  padding: 5px 7px 4px 9px;
  border-radius: 8px;
  box-shadow: 0 1px 1px rgba(11, 20, 26, .13);
}
.last { margin-bottom: 12px; }
.in { background: #fff; }
.out { background: #d9fdd3; align-self: flex-end; }
.tail::before {
  content: "";
  position: absolute;
  top: 0;
  width: 8px;
  height: 12px;
  background: inherit;
}
.in.tail { border-top-left-radius: 0; }
.in.tail::before { left: -7px; clip-path: polygon(0 0, 100% 0, 100% 100%); }
.out.tail { border-top-right-radius: 0; }
.out.tail::before { right: -7px; clip-path: polygon(0 0, 100% 0, 0 100%); }

.text { line-height: 22px; white-space: nowrap; }
.meta {
  display: flex;
  align-items: center;
  gap: 4px;
  align-self: flex-end;
  margin-bottom: -1px;
  font: 10px/15px "Open Sans", sans-serif;
  color: #667781;
  white-space: nowrap;
}
.ticks { width: 16px; height: 11px; }

.date {
  align-self: center;
  height: 32px;
  margin: 0 0 12px;
  padding: 0 12px;
  border-radius: 8px;
  background: rgba(255, 255, 255, .95);
  box-shadow: 0 1px 1px rgba(11, 20, 26, .13);
  font: 12px/31px "Open Sans", sans-serif;
  color: #54656f;
}

.reply { flex-direction: column; gap: 0; padding: 3px 3px 4px; }
.quote {
  height: 54px;
  display: flex;
  flex-direction: column;
  padding: 5px 13px 0 8px;
  border-left: 4px solid #06cf9c;
  border-radius: 8px;
  background: #d1f4cc;
}
.who { font: 600 12px/20px "Open Sans", sans-serif; color: #06cf9c; }
.quoted { line-height: 22px; font-size: 13px; color: #667781; white-space: nowrap; text-align: left; }
.line { display: flex; justify-content: space-between; padding: 5px 4px 0 6px; min-height: 29px; }

.voice { gap: 0; min-height: 67px; padding: 6px 7px 4px 10px; }
.logo { width: 55px; height: 55px; }
.logo-text { font: 5px "DejaVu Sans", sans-serif; fill: #414a6b; }
.play { width: 20px; height: 22px; margin: 14px 18px 0 19px; }
.track { display: flex; flex-direction: column; width: 207px; padding-top: 13px; }
.seek { display: grid; padding: 0 14px 0 3px; }
.seek > * { grid-area: 1 / 1; }
.wave { width: 182px; height: 24px; margin-left: 8px; }
.seekbar {
  appearance: none;
  width: 100%;
  height: 24px;
  margin: 0;
  background: none;
}
.seekbar::-webkit-slider-thumb {
  appearance: none;
  width: 12px;
  height: 12px;
  border-radius: 50%;
  background: #53bdf5;
}
.times {
  display: flex;
  justify-content: space-between;
  margin-top: 5px;
  font: 10px/15px "Open Sans", sans-serif;
  color: #667781;
}

.composer {
  height: 63px;
  display: flex;
  align-items: center;
  gap: 16px;
  padding: 0 19px 2px 16px;
  border-bottom: 1px solid #cfcfcf;
  background: #f0f1f5;
}
.field {
  flex: 1;
  height: 44px;
  display: flex;
  align-items: center;
  padding: 0 17px 0 13px;
  border-radius: 8px;
  background: #fff;
}
.caret { width: 1px; height: 20px; margin: 0 3px 0 10px; background: #3b4a54; }
.entry {
  flex: 1;
  min-width: 0;
  padding: 0;
  border: 0;
  outline: 0;
  background: none;
  font: 14px/20px "Open Sans", sans-serif;
  color: #3b4a54;
}
.entry::placeholder { color: #667781; opacity: 1; }
.dot { width: 7px; height: 7px; border-radius: 50%; background: #008069; }
```
